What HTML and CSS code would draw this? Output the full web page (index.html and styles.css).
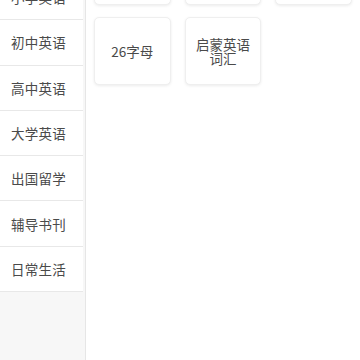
FILE: index.html
```html
<!DOCTYPE html>
<html lang="zh-CN">

<head>
    <meta charset="UTF-8">
    <meta name="viewport" content="width=device-width, initial-scale=1.0">
    <title>英语分类</title>
    <link rel="stylesheet" href="styles.css">
</head>

<body>
    <div class="page">
        <div class="side-menu">
            <ul class="menu-list">
                <li class="menu-item">小学英语</li>
                <li class="menu-item">初中英语</li>
                <li class="menu-item">高中英语</li>
                <li class="menu-item">大学英语</li>
                <li class="menu-item">出国留学</li>
                <li class="menu-item">辅导书刊</li>
                <li class="menu-item">日常生活</li>
            </ul>
        </div>

        <div class="content">
            <div class="card-grid">
                <!-- first row is scrolled out of view -->
                <div class="card"></div>
                <div class="card"></div>
                <div class="card"></div>
                <div class="card">26字母</div>
                <div class="card">启蒙英语词汇</div>
            </div>
        </div>
    </div>
</body>

</html>
```

FILE: styles.css
```css
html,
body {
    margin: 0;
    padding: 0;
    height: 100%;
}

body {
    font-family: "Noto Sans CJK SC", "Noto Sans", sans-serif;
    background-color: #fff;
    color: #4a4a4a;
    overflow: hidden;
}

.page {
    display: flex;
    height: 360px;
}

.side-menu {
    width: 85px;
    flex-shrink: 0;
    background-color: #f7f7f7;
    border-right: 1px solid #e6e6e6;
}

.menu-list {
    list-style: none;
    margin: -25px 0 0 0;
    padding: 0;
}

.menu-item {
    box-sizing: border-box;
    height: 45.3px;
    display: flex;
    align-items: center;
    justify-content: center;
    padding-right: 6px;
    margin-right: 2px;
    background-color: #fff;
    border-bottom: 1px solid #e8e8e8;
    font-size: 13.5px;
    letter-spacing: 0.2px;
}

.content {
    flex: 1;
    background-color: #fff;
}

.card-grid {
    display: grid;
    grid-template-columns: repeat(3, 1fr);
    grid-auto-rows: 68px;
    column-gap: 14px;
    row-gap: 12px;
    margin-top: -63px;
    padding: 0 8px;
}

.card {
    box-sizing: border-box;
    display: flex;
    align-items: center;
    justify-content: center;
    padding: 0 8px;
    text-align: center;
    font-size: 13.5px;
    line-height: 14px;
    color: #4a4a4a;
    background-color: #fff;
    border: 1px solid #efefef;
    border-radius: 5px;
    box-shadow: 0 1px 3px rgba(0, 0, 0, 0.08);
}
```
